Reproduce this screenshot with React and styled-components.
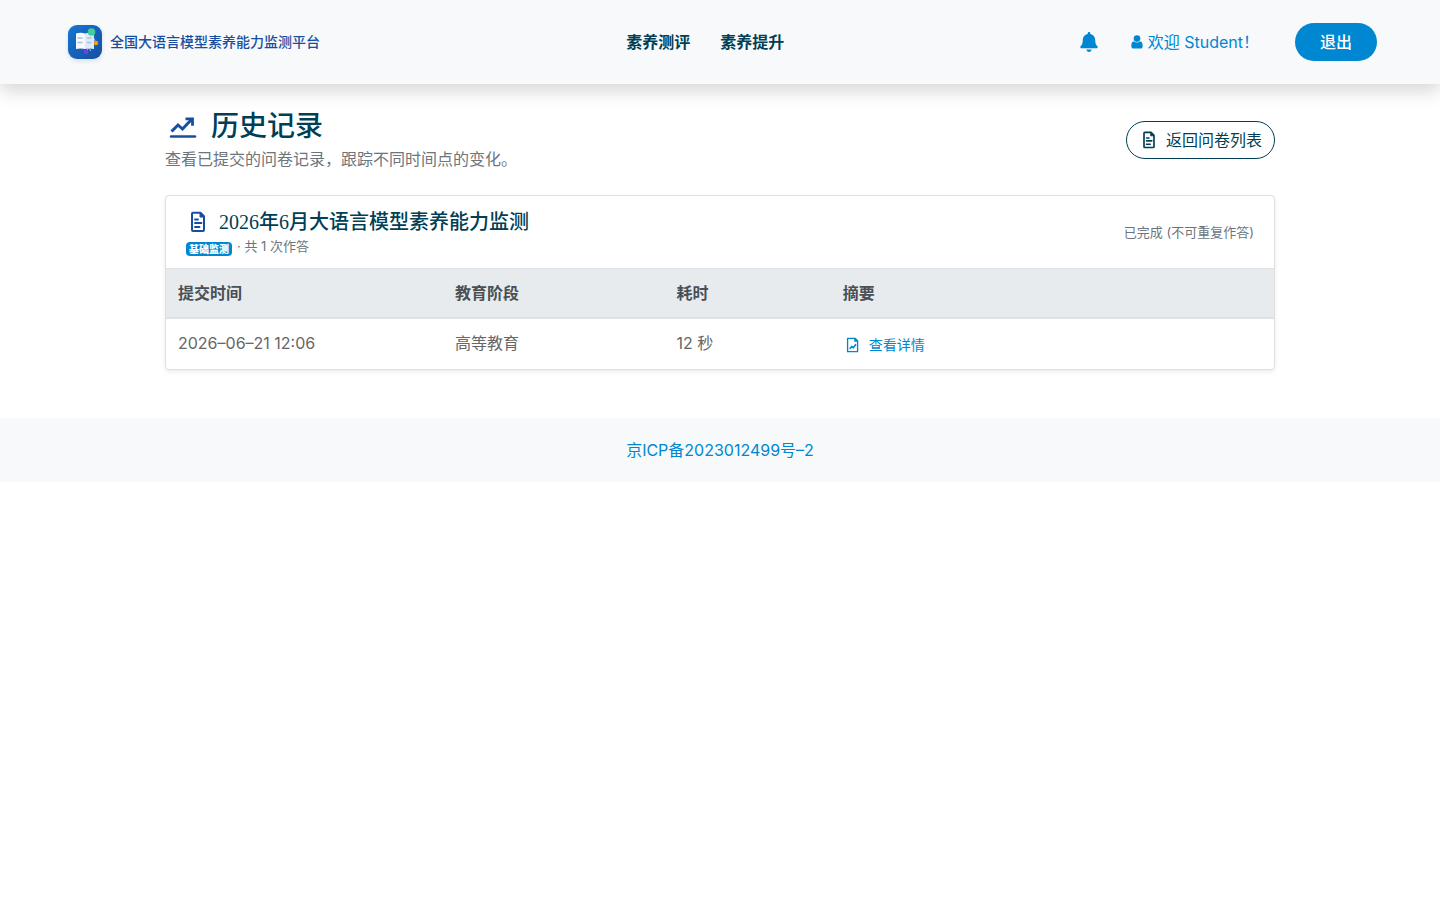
import React from "react"
import styled, { createGlobalStyle } from "styled-components"
import { FaBell } from "react-icons/fa"

const GlobalStyle = createGlobalStyle`
  * {
    box-sizing: border-box;
  }
  body {
    margin: 0;
    background: #fff;
    color: #666;
    font-family: Inter, "Noto Sans CJK SC", sans-serif;
    font-size: 16px;
    line-height: 24px;
  }
  a {
    color: #0087d1;
    text-decoration: none;
  }
`

const Header = styled.header`
  position: sticky;
  top: 0;
  z-index: 10;
  display: flex;
  align-items: center;
  justify-content: space-between;
  height: 84px;
  padding: 0 63px 0 65px;
  background: #f8f9fb;
  box-shadow: 0 8px 16px rgba(0, 0, 0, 0.15);
`

const Brand = styled.a`
  display: flex;
  align-items: center;
  gap: 5px;
  margin-right: 12px;
  color: #174ea0;
  font-size: 14px;
  font-weight: 500;
`

const Nav = styled.nav`
  display: flex;
  gap: 30px;
`

const NavItem = styled.a`
  color: #003f55;
  font-weight: 700;
`

const UserArea = styled.div`
  display: flex;
  align-items: center;
`

const BellLink = styled.a`
  display: flex;
  margin-right: 32px;
`

const Welcome = styled.a`
  display: flex;
  align-items: center;
  gap: 5px;
  margin-right: 36px;
`

const LogoutButton = styled.button`
  height: 38px;
  padding: 0 25px;
  border: 0;
  border-radius: 19px;
  background: #0087d1;
  color: #fff;
  font: inherit;
  font-weight: 500;
  cursor: pointer;
`

const Main = styled.main`
  max-width: 1140px;
  margin: 0 auto;
  padding: 25px 15px 48px;
`

const PageHead = styled.div`
  display: flex;
  align-items: center;
  justify-content: space-between;
  margin-bottom: 24px;
`

const PageTitle = styled.h1`
  display: flex;
  align-items: center;
  gap: 10px;
  margin: 0 0 2px;
  color: #003f55;
  font-family: "Liberation Serif", "Noto Sans CJK SC", serif;
  font-size: 28px;
  font-weight: 500;
  line-height: 36px;
`

const Lead = styled.p`
  margin: 0;
  color: #6c757d;
`

const BackLink = styled.a`
  display: flex;
  align-items: center;
  gap: 7px;
  height: 38px;
  padding: 0 12px;
  border: 1px solid #003f55;
  border-radius: 19px;
  color: #003f55;
`

const Card = styled.section`
  overflow: hidden;
  border: 1px solid #dfdfdf;
  border-radius: 4px;
  box-shadow: 0 2px 4px rgba(0, 0, 0, 0.08);
`

const CardHeader = styled.div`
  display: flex;
  align-items: center;
  justify-content: space-between;
  padding: 12px 20px;
`

const CardTitle = styled.h2`
  display: flex;
  align-items: center;
  gap: 9px;
  margin: 0;
  color: #003f55;
  font-family: "Liberation Serif", "Noto Sans CJK SC", serif;
  font-size: 20px;
  font-weight: 500;
  line-height: 28px;
`

const Meta = styled.div`
  display: flex;
  align-items: flex-end;
  gap: 5px;
  color: #6c757d;
  font-size: 13px;
  line-height: 20px;
`

const Badge = styled.span`
  padding: 0 3px;
  border-radius: 4px;
  background: #0087d1;
  color: #fff;
  font-size: 10px;
  font-weight: 900;
  line-height: 14px;
`

const Table = styled.table`
  width: 100%;
  table-layout: fixed;
  border-collapse: separate;
  border-spacing: 0;
`

const Th = styled.th`
  width: ${props => props.$width};
  padding: 12px;
  border-top: 1px solid #dee2e6;
  border-bottom: 2px solid #dee2e6;
  background: #e8ebee;
  color: #495057;
  font-weight: 700;
  line-height: 24px;
  text-align: left;
`

const Td = styled.td`
  padding: 12px;
  line-height: 24px;
  vertical-align: top;
`

const DetailLink = styled.a`
  display: flex;
  align-items: center;
  gap: 6px;
  padding-top: 2px;
  font-size: 14px;
`

const Footer = styled.footer`
  padding: 20px;
  background: #f8f9fb;
  text-align: center;
`

const Logo = () => (
  <svg width="40" height="44" viewBox="0 0 40 44" aria-hidden="true">
    <defs>
      <linearGradient id="logo-bg" x1="0" y1="0" x2="1" y2="1">
        <stop offset="0" stopColor="#1976d2" />
        <stop offset="1" stopColor="#174ea0" />
      </linearGradient>
      <filter id="logo-shadow" x="-20%" y="-20%" width="140%" height="150%">
        <feDropShadow dx="0" dy="2" stdDeviation="2" floodColor="#174ea0" floodOpacity="0.15" />
      </filter>
    </defs>
    <rect x="3" y="5" width="34" height="34" rx="9" fill="url(#logo-bg)" filter="url(#logo-shadow)" />
    <path d="M11 13.5q4.5-1.500 9 0v15.500q-4.500-1.200-9 0z" fill="#f6f9fd" />
    <path d="M20 13.5q4-1.500 9 0v15.500q-4.500-1.200-9 0z" fill="#dceafb" />
    <path d="M12.5 18h5M12.5 22.500h5M22 18h4.500M22 22.500h4.500" stroke="#a9c0e0" strokeWidth="1.4" />
    <path d="M27 14l3.500 8M21 31l3-3 2 3" fill="none" stroke="#bcd4f1" strokeWidth="0.8" />
    <circle cx="26.5" cy="12" r="3.800" fill="#42ce98" />
    <circle cx="31" cy="23" r="2.200" fill="#f59e0b" />
    <circle cx="21" cy="32" r="2.200" fill="#7c3aed" />
  </svg>
)

const UserIcon = () => (
  <svg width="12" height="14" viewBox="0 0 12 14" fill="#0087d1" aria-hidden="true">
    <circle cx="6" cy="3.6" r="3.300" />
    <path d="M3 6.200C1 6.400.3 8.600.3 10.900.3 12.500 1.200 13.500 2.600 13.500h6.800c1.400 0 2.300-1 2.300-2.600 0-2.300-.7-4.500-2.700-4.700-.8.800-1.800 1.200-3 1.200s-2.200-.4-3-1.200z" />
  </svg>
)

const ChartIcon = () => (
  <svg width="36" height="32" viewBox="0 0 36 32" fill="none" stroke="#174ea0" aria-hidden="true">
    <path d="M6.500 20.500l6.500-6.500 4.500 4L26.500 8.500" strokeWidth="3" />
    <path d="M20.500 7.800h7v7" strokeWidth="2.800" />
    <path d="M6 25.500h24" strokeWidth="2.500" strokeLinecap="round" />
  </svg>
)

const DocIcon = ({ size, color }) => (
  <svg width={size} height={size} viewBox="0 0 24 24" fill="none" stroke={color} aria-hidden="true">
    <path d="M7 2.800h7.500L18 6.300V20a1 1 0 0 1-1 1H7a1 1 0 0 1-1-1V3.800a1 1 0 0 1 1-1z" strokeWidth="2" strokeLinejoin="round" />
    <path d="M14 3v4h4z" fill={color} />
    <path d="M9 9.500h3M9 13h6.500M9 17h4.500" strokeWidth="1.900" strokeLinecap="round" />
  </svg>
)

const ReportIcon = () => (
  <svg width="20" height="20" viewBox="0 0 24 24" fill="none" stroke="#0087d1" aria-hidden="true">
    <path d="M5.500 4h9L17.500 7v13h-12z" strokeWidth="1.600" strokeLinejoin="round" />
    <path d="M14 4v3.500h3.500z" fill="#0087d1" />
    <path d="M8 16.500l2.500-2.500 2 1.200 3-4" strokeWidth="2" />
  </svg>
)

const columns = [
  { label: "提交时间", width: "25%" },
  { label: "教育阶段", width: "20%" },
  { label: "耗时", width: "15%" },
  { label: "摘要", width: "40%" },
]

const records = [{ time: "2026–06–21 12:06", stage: "高等教育", duration: "12 秒" }]

const App = () => {
  return (
    <>
      <GlobalStyle />
      <Header>
        <Brand href="#">
          <Logo />
          全国大语言模型素养能力监测平台
        </Brand>
        <Nav>
          <NavItem href="#">素养测评</NavItem>
          <NavItem href="#">素养提升</NavItem>
        </Nav>
        <UserArea>
          <BellLink href="#" aria-label="通知">
            <FaBell size={20} />
          </BellLink>
          <Welcome href="#">
            <UserIcon />
            欢迎 Student！
          </Welcome>
          <LogoutButton type="button">退出</LogoutButton>
        </UserArea>
      </Header>
      <Main>
        <PageHead>
          <div>
            <PageTitle>
              <ChartIcon />
              历史记录
            </PageTitle>
            <Lead>查看已提交的问卷记录，跟踪不同时间点的变化。</Lead>
          </div>
          <BackLink href="#">
            <DocIcon size={20} color="#003f55" />
            返回问卷列表
          </BackLink>
        </PageHead>
        <Card>
          <CardHeader>
            <div>
              <CardTitle>
                <DocIcon size={24} color="#174ea0" />
                2026年6月大语言模型素养能力监测
              </CardTitle>
              <Meta>
                <Badge>基础监测</Badge>
                <span>· 共 1 次作答</span>
              </Meta>
            </div>
            <Meta>已完成 (不可重复作答)</Meta>
          </CardHeader>
          <Table>
            <thead>
              <tr>
                {columns.map(column => (
                  <Th key={column.label} $width={column.width}>
                    {column.label}
                  </Th>
                ))}
              </tr>
            </thead>
            <tbody>
              {records.map(record => (
                <tr key={record.time}>
                  <Td>{record.time}</Td>
                  <Td>{record.stage}</Td>
                  <Td>{record.duration}</Td>
                  <Td>
                    <DetailLink href="#">
                      <ReportIcon />
                      查看详情
                    </DetailLink>
                  </Td>
                </tr>
              ))}
            </tbody>
          </Table>
        </Card>
      </Main>
      <Footer>
        <a href="#">京ICP备2023012499号–2</a>
      </Footer>
    </>
  )
}

export default App
